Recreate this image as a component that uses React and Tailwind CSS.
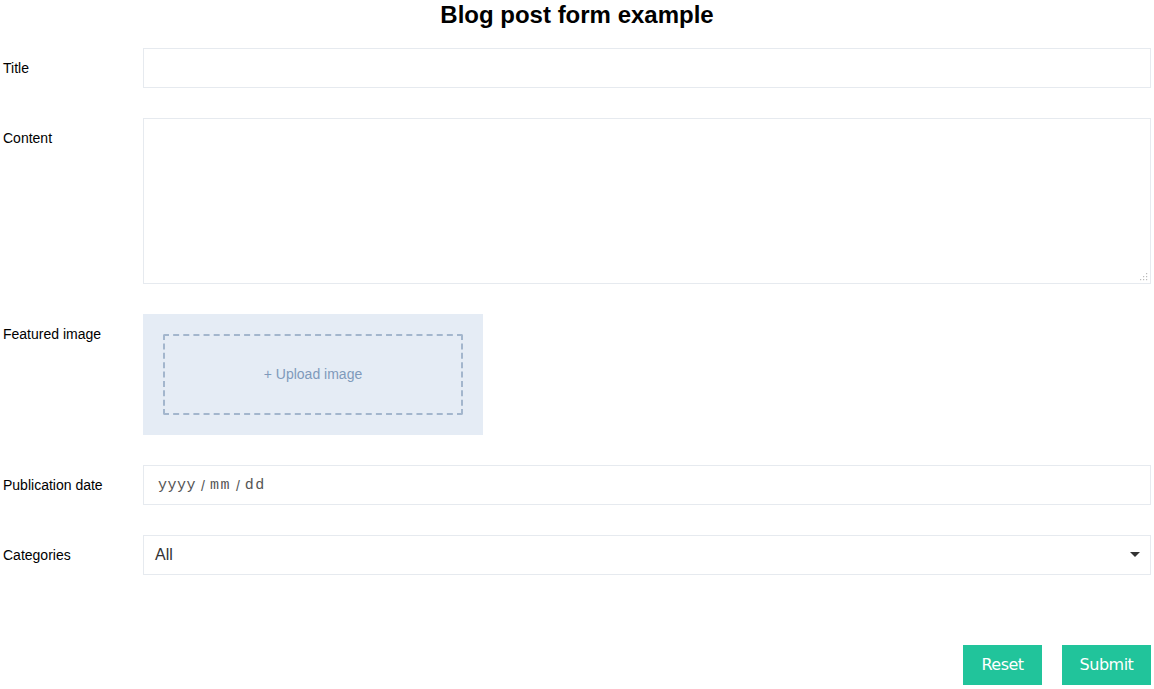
import React from "react";

function Row({ label, children }) {
  return (
    <div className="flex items-start">
      <div className="w-[140px] shrink-0 h-[40px] flex items-center text-[14px] text-black">{label}</div>
      <div className="flex-1">{children}</div>
    </div>
  );
}

export default function App() {
  return (
    <div className="w-[1154px] h-[689px] bg-white px-[3px] font-['Liberation_Sans',Arial,sans-serif] overflow-hidden">
      <h1 className="text-center text-[24px] font-bold leading-[28px] pt-[1px] text-black">Blog post form example</h1>
      <div className="flex flex-col gap-[30px] mt-[19px]">
        <Row label="Title">
          <div className="h-[40px] border border-[#e6eaef] bg-white"></div>
        </Row>
        <Row label="Content">
          <div className="relative h-[166px] border border-[#e6eaef] bg-white">
            <svg className="absolute right-[2px] bottom-[2px]" width="8" height="8" viewBox="0 0 8 8">
              <rect x="6" y="0" width="1.2" height="1.2" fill="#bbb" />
              <rect x="3" y="3" width="1.2" height="1.2" fill="#bbb" />
              <rect x="6" y="3" width="1.2" height="1.2" fill="#bbb" />
              <rect x="0" y="6" width="1.2" height="1.2" fill="#bbb" />
              <rect x="3" y="6" width="1.2" height="1.2" fill="#bbb" />
              <rect x="6" y="6" width="1.2" height="1.2" fill="#bbb" />
            </svg>
          </div>
        </Row>
        <Row label="Featured image">
          <div className="w-[340px] h-[121px] bg-[#e5ecf5] p-[20px]">
            <div className="h-full border-2 border-dashed border-[#a3b6cd] rounded-[2px] flex items-center justify-center text-[14px] text-[#7f9abb]">
              + Upload image
            </div>
          </div>
        </Row>
        <Row label="Publication date">
          <div className="h-[40px] border border-[#e6eaef] bg-white flex items-center pl-[14px] pt-[2px] text-[14px] text-[#555]">
            <span className="font-['Liberation_Mono',monospace] text-[15px] tracking-[0.5px]">yyyy</span>
            <span className="px-[5px]">/</span>
            <span className="font-['Liberation_Mono',monospace] text-[15px] tracking-[1.5px]">mm</span>
            <span className="px-[5px]">/</span>
            <span className="font-['Liberation_Mono',monospace] text-[15px] tracking-[1.5px]">dd</span>
          </div>
        </Row>
        <Row label="Categories">
          <div className="h-[40px] border border-[#e6eaef] bg-white flex items-center justify-between pl-[11px] pr-[10px] text-[16px] text-[#333]">
            <span>All</span>
            <svg width="10" height="6" viewBox="0 0 10 6"><path d="M0 0 L10 0 L5 5 Z" fill="#333" /></svg>
          </div>
        </Row>
      </div>
      <div className="flex justify-end gap-[20px] mt-[70px]">
        <button className="w-[79px] h-[40px] bg-[#21c49b] text-white text-[16px] font-['DejaVu_Sans',sans-serif] tracking-[-0.5px]">Reset</button>
        <button className="w-[89px] h-[40px] bg-[#21c49b] text-white text-[16px] font-['DejaVu_Sans',sans-serif] tracking-[-0.5px]">Submit</button>
      </div>
    </div>
  );
}
